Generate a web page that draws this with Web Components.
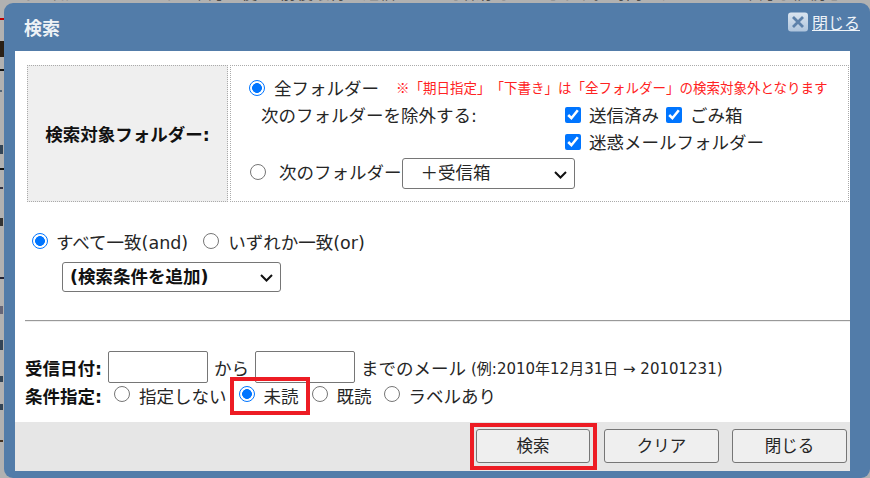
<!DOCTYPE html>
<html lang="ja">
<head>
<meta charset="utf-8">
<title>検索</title>
<style>
  html, body { margin: 0; height: 100%; overflow: hidden; background: #b1b1b1; }
  body {
    font-family: "DejaVu Sans", "Noto Sans CJK JP", sans-serif; font-size: 17.5px; color: #262626;
    text-spacing-trim: space-all;
  }
  search-dialog div[slot=footer] { display: flex; justify-content: flex-end; gap: 13px; padding: 7px 3px 0 0; }
</style>
</head>
<body>
<page-backdrop></page-backdrop>
<search-dialog heading="検索">
  <folder-table></folder-table>
  <match-section></match-section>
  <date-section></date-section>
  <div slot="footer">
    <dialog-button marked>検索</dialog-button>
    <dialog-button>クリア</dialog-button>
    <dialog-button>閉じる</dialog-button>
  </div>
</search-dialog>

<script>
class PageBackdrop extends HTMLElement {
  constructor() {
    super();
    this.attachShadow({ mode: "open" }).innerHTML = `
      <style>
        :host { position: absolute; inset: 0; display: block; overflow: hidden; }
        .top { position: absolute; left: 20px; top: -16px; font-size: 16px; line-height: 20px; white-space: nowrap; color: #4a4a4a; letter-spacing: .6px; }
        svg { position: absolute; left: 0; top: 0; }
      </style>
      <div class="top">なお知らせメール  その確認に使い   前後取得の送信メールを保存しておきます。時間は、メールの確認し継続されていた</div>
      <svg width="4" height="478">
        <rect y="18" width="4" height="2" fill="#c00000"/>
        <rect y="41" width="4" height="16" fill="#2a2016"/>
        <rect y="69" width="4" height="2" fill="#111"/>
        <rect y="90" width="2" height="2" fill="#567"/>
        <rect y="145" width="3" height="9" fill="#345"/>
        <rect y="168" width="4" height="2" fill="#111"/>
        <rect y="187" width="3" height="2" fill="#334"/>
        <rect y="218" width="3" height="8" fill="#333"/>
        <rect y="277" width="4" height="2" fill="#223"/>
        <rect y="306" width="3" height="8" fill="#667"/>
        <rect y="340" width="3" height="10" fill="#345"/>
        <rect y="376" width="3" height="6" fill="#345"/>
        <rect y="404" width="3" height="6" fill="#345"/>
        <rect y="440" width="3" height="2" fill="#432"/>
      </svg>`;
  }
}

const dialogTemplate = document.createElement("template");
dialogTemplate.innerHTML = `
  <style>
    :host {
      position: absolute; left: 4px; top: 3px; width: 866px; height: 475px;
      box-sizing: border-box; background: #527ca9; border-radius: 9px;
      padding: 0 20px 7px 11px; display: flex; flex-direction: column;
    }
    .title { height: 48px; flex: none; display: flex; align-items: center; justify-content: space-between; }
    h1 { margin: 0 0 0 9px; font-size: 18px; font-weight: 700; color: #eef2f6; }
    .close { display: flex; align-items: center; gap: 4px; margin: -10px -10px 0 0; color: #eef3f8; font-size: 16px; text-decoration: underline; }
    .body { flex: 1; background: #fff; display: flex; flex-direction: column; min-height: 0; }
    .main { flex: 1; padding: 14px 1px 0 10px; }
    .foot { flex: none; height: 49px; background: #e6e6e6; }
  </style>
  <div class="title">
    <h1></h1>
    <a class="close">
      <svg width="20" height="20" viewBox="0 0 20 20">
        <defs><linearGradient id="g" x1="0" y1="0" x2="0" y2="1"><stop offset="0" stop-color="#dbe5f0"/><stop offset="1" stop-color="#aec4dc"/></linearGradient></defs>
        <rect x="0" y="0.5" width="20" height="19" rx="3" fill="url(#g)"/>
        <path d="M5 5l10 10M15 5L5 15" stroke="#5d81aa" stroke-width="2.8"/>
      </svg>閉じる</a>
  </div>
  <div class="body">
    <div class="main"><slot></slot></div>
    <div class="foot"><slot name="footer"></slot></div>
  </div>`;

class SearchDialog extends HTMLElement {
  constructor() {
    super();
    this.attachShadow({ mode: "open" });
    this.shadowRoot.appendChild(dialogTemplate.content.cloneNode(true));
  }
  connectedCallback() {
    this.shadowRoot.querySelector("h1").textContent = this.getAttribute("heading");
  }
}

class DialogButton extends HTMLElement {
  constructor() {
    super();
    this.attachShadow({ mode: "open" }).innerHTML = `
      <style>
        :host { display: inline-block; }
        :host([marked]) { padding: 2px 3px 3px 2px; margin: -2px -2px -3px -2px; outline: 4px solid #ed1c24; }
        :host([marked]) button { width: 114px; }
        button {
          display: block; width: 115px; height: 34px; padding: 0 0 2px; box-sizing: border-box;
          background: #efefef; border: 1px solid #767676; border-radius: 3px;
          font: 16.5px "DejaVu Sans", "Noto Sans CJK JP", sans-serif; color: #262626;
        }
      </style>
      <button><slot></slot></button>`;
  }
}

class FormRadio extends HTMLElement {
  constructor() {
    super();
    this.attachShadow({ mode: "open" }).innerHTML = `
      <style>
        :host { display: inline-flex; align-items: center; white-space: nowrap; }
        :host([marked]) { padding: 2px 7px 3px 5px; margin: -2px -7px -3px -5px; outline: 4px solid #ed1c24; }
        input {
          appearance: none; box-sizing: border-box; width: 16px; height: 16px; margin: 0 var(--gap, 9px) 0 0;
          flex: none; position: relative; top: var(--lift, -2px);
          border: 1.5px solid #767676; border-radius: 50%; background: #fff;
        }
        input:checked {
          border-color: #0075ff;
          background: radial-gradient(circle, #0075ff 0 4.6px, #fff 5.2px);
        }
      </style>
      <input type="radio"><slot></slot>`;
  }
  connectedCallback() {
    this.shadowRoot.querySelector("input").checked = this.hasAttribute("checked");
  }
}

class FormCheck extends HTMLElement {
  constructor() {
    super();
    this.attachShadow({ mode: "open" }).innerHTML = `
      <style>
        :host { display: inline-flex; align-items: center; white-space: nowrap; }
        input { width: 16px; height: 16px; margin: 0 8px 0 0; flex: none; position: relative; top: -2px; }
      </style>
      <input type="checkbox" checked><slot></slot>`;
  }
}

class DropSelect extends HTMLElement {
  constructor() {
    super();
    this.attachShadow({ mode: "open" }).innerHTML = `
      <style>
        :host { display: block; position: relative; }
        select {
          appearance: none; display: block; box-sizing: border-box; height: 100%; width: 100%;
          background: #fff; border: 1px solid #767676; border-radius: 3px; color: inherit;
          padding: 0 0 0 var(--indent, 7px); font: inherit; text-spacing-trim: space-all;
        }
        svg { position: absolute; right: 8px; top: 50%; margin-top: -3px; pointer-events: none; }
      </style>
      <select></select>
      <svg width="13" height="8" viewBox="0 0 13 8"><path d="M1 1l5.5 5.5L12 1" fill="none" stroke="#111" stroke-width="2"/></svg>`;
  }
  connectedCallback() {
    const option = document.createElement("option");
    option.textContent = this.getAttribute("value");
    this.shadowRoot.querySelector("select").appendChild(option);
  }
}

class FolderTable extends HTMLElement {
  constructor() {
    super();
    this.attachShadow({ mode: "open" }).innerHTML = `
      <style>
        :host { display: grid; grid-template-columns: 201px 1fr; column-gap: 2px; height: 137px; margin-left: 2px; }
        .cell { border: 1px dotted #aaa; box-sizing: border-box; }
        .head { background: #efefef; display: flex; align-items: center; justify-content: center; font-weight: 700; color: #111; }
        .side { padding: 10px 0 0 18px; line-height: 27px; }
        .row { display: flex; align-items: center; height: 27px; }
        .note { color: #f22; font-family: "Noto Sans CJK JP", sans-serif; font-size: 13.5px; margin-left: 17px; position: relative; top: -2px; }
        .excl { display: grid; grid-template-columns: 304px auto; margin-left: 12px; height: 54px; align-items: start; }
        .excl p { margin: 0; }
        .picks { display: flex; flex-wrap: wrap; width: 210px; column-gap: 7px; }
        .other { --gap: 13px; display: flex; align-items: center; margin-top: 1px; }
        drop-select { width: 173px; height: 31px; flex: none; --indent: 18px; }
      </style>
      <div class="cell head">検索対象フォルダー:</div>
      <div class="cell side">
        <div class="row">
          <form-radio checked>全フォルダー</form-radio>
          <span class="note">※「期日指定」「下書き」は「全フォルダー」の検索対象外となります</span>
        </div>
        <div class="excl">
          <p>次のフォルダーを除外する:</p>
          <div class="picks">
            <form-check>送信済み</form-check>
            <form-check>ごみ箱</form-check>
            <form-check>迷惑メールフォルダー</form-check>
          </div>
        </div>
        <div class="other">
          <form-radio style="margin-left:1px">次のフォルダー</form-radio>
          <drop-select value="＋受信箱"></drop-select>
        </div>
      </div>`;
  }
}

class MatchSection extends HTMLElement {
  constructor() {
    super();
    this.attachShadow({ mode: "open" }).innerHTML = `
      <style>
        :host { display: block; padding: 27px 0 0 7px; }
        .modes { display: flex; align-items: center; gap: 15px; height: 28px; line-height: 28px; }
        drop-select { width: 219px; height: 30px; margin: 5px 0 0 30px; font-weight: 700; color: #111; }
        hr { margin: 28px -1px 0 -7px; border: 0; border-top: 1px solid #999; border-bottom: 1px solid #eee; }
      </style>
      <div class="modes">
        <form-radio checked style="--gap:8px">すべて一致(and)</form-radio>
        <form-radio>いずれか一致(or)</form-radio>
      </div>
      <drop-select value="(検索条件を追加)"></drop-select>
      <hr>`;
  }
}

class DateSection extends HTMLElement {
  constructor() {
    super();
    this.attachShadow({ mode: "open" }).innerHTML = `
      <style>
        :host { display: block; padding: 29px 0 0 0; }
        .row { display: flex; align-items: center; white-space: nowrap; }
        b { color: #111; width: 83px; flex: none; }
        input {
          width: 100px; height: 32px; box-sizing: border-box; margin: 0; padding: 0;
          border: 1px solid #767676; border-radius: 2px; background: #fff;
        }
        .sep { margin: 0 6px; }
        small { font-size: 15px; margin-left: 5px; }
        .flags { height: 25px; --gap: 9px; --lift: -2px; }
        .flags form-radio { margin-right: 12px; }
        .flags form-radio[marked] { margin-right: 6px; }
      </style>
      <div class="row">
        <b>受信日付:</b><input type="text"><span class="sep">から</span><input type="text"><span class="sep" style="margin-right:0">までのメール</span>
        <small>(例:2010年12月31日 → 20101231)</small>
      </div>
      <div class="row flags">
        <b style="width:89px">条件指定:</b>
        <form-radio>指定しない</form-radio>
        <form-radio checked marked>未読</form-radio>
        <form-radio>既読</form-radio>
        <form-radio>ラベルあり</form-radio>
      </div>`;
  }
}

customElements.define("page-backdrop", PageBackdrop);
customElements.define("search-dialog", SearchDialog);
customElements.define("dialog-button", DialogButton);
customElements.define("form-radio", FormRadio);
customElements.define("form-check", FormCheck);
customElements.define("drop-select", DropSelect);
customElements.define("folder-table", FolderTable);
customElements.define("match-section", MatchSection);
customElements.define("date-section", DateSection);
</script>
</body>
</html>
